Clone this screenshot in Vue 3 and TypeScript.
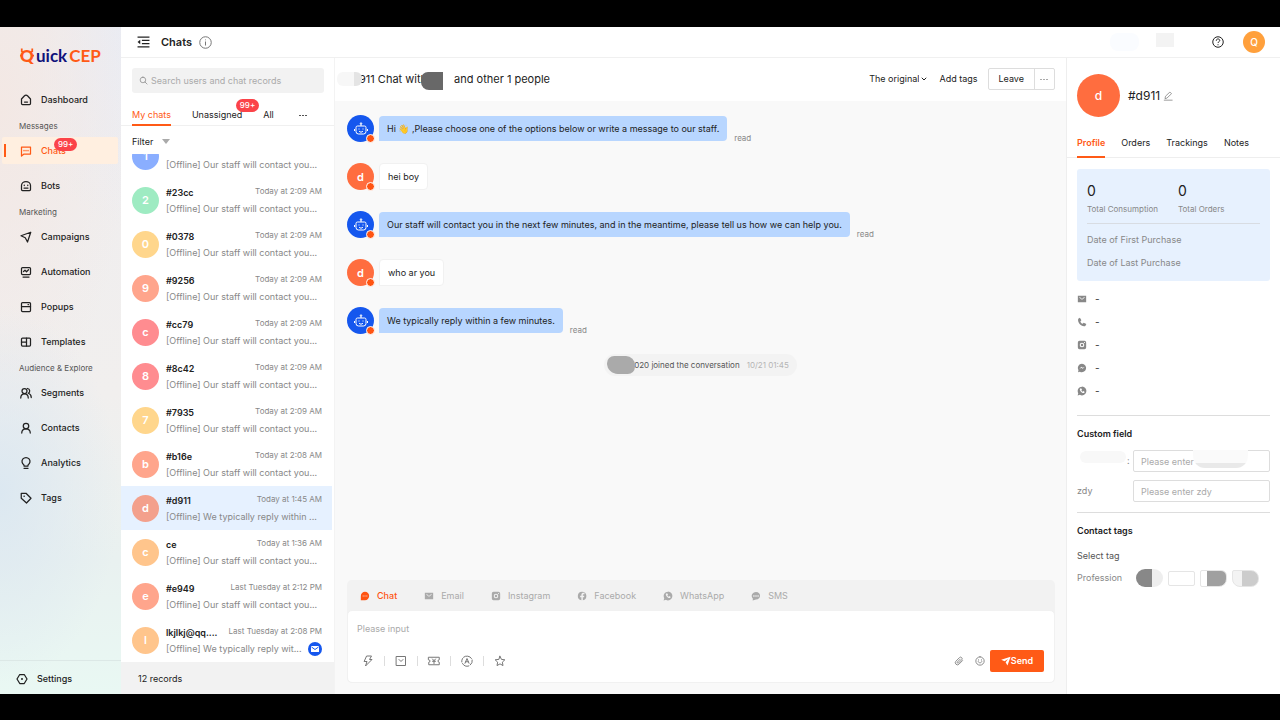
<script setup lang="ts">
import { ref } from 'vue'

interface NavItem { label: string; icon: string; badge?: string; active?: boolean }
interface NavGroup { title?: string; items: NavItem[] }
interface Conversation { initial: string; color: string; name: string; time: string; text: string; mail?: boolean; active?: boolean }
interface Message { from: 'bot' | 'visitor'; text: string; read?: boolean }

const lineIcons: Record<string, string[]> = {
  dashboard: ['M3 10 9 3.500a4 4 0 0 1 6 0L21 10v9a2 2 0 0 1-2 2H5a2 2 0 0 1-2-2z', 'M9 16h6'],
  chats: ['M3 4h18v14H8l-5 4z', 'M8 10.500v1', 'M12 10.500v1', 'M16 10.500v1'],
  bots: ['M3 11a9 8 0 0 1 18 0v8a2 2 0 0 1-2 2H5a2 2 0 0 1-2-2z', 'M8.500 10v1', 'M15.500 10v1', 'M8 16h8'],
  campaigns: ['M21.500 2.500 2 9.500l8.500 4L15 22z'],
  automation: ['M5 3h14a2 2 0 0 1 2 2v10a2 2 0 0 1-2 2H5a2 2 0 0 1-2-2V5a2 2 0 0 1 2-2z', 'M7 11l3-2.500 3 3 4-4', 'M6 22h12'],
  popups: ['M5 3h14a2 2 0 0 1 2 2v14a2 2 0 0 1-2 2H5a2 2 0 0 1-2-2V5a2 2 0 0 1 2-2z', 'M3 11h18', 'M16 7h1'],
  templates: ['M5 4h14a2 2 0 0 1 2 2v12a2 2 0 0 1-2 2H5a2 2 0 0 1-2-2V6a2 2 0 0 1 2-2z', 'M13 4v16', 'M3 12h10'],
  segments: ['M9 3a5 5 0 1 1 0 10A5 5 0 0 1 9 3z', 'M1.500 22c0-5 3-8.500 7.500-8.500s7.500 3.500 7.500 8.500', 'M15 3a5 5 0 0 1 1.500 9.500c3.500 1 6 4.500 6 8.500'],
  contacts: ['M12 2.500a5.500 5.500 0 1 1 0 11 5.500 5.500 0 0 1 0-11z', 'M3.500 22c0-5 3.500-8.500 8.500-8.500s8.500 3.500 8.500 8.500'],
  analytics: ['M8 18v-2A8 8 0 1 1 16 16v2z', 'M8 22.500h8'],
  tags: ['M2.500 2.500h9.500l10 10-9 9.500-10.500-9.500z', 'M8 8h.5v.5H8z'],
  settings: ['M7.500 3h9l5.500 9-5.500 9h-9L2 12z', 'M12 11.200a.8.8 0 1 1 0 1.600.8.8 0 0 1 0-1.600z'],
  bolt: ['M10 2h9l-4 7h5L7 22l3-9H5z'],
  order: ['M3 3h18v18H3z', 'M8 9l4 4 4-4'],
  coupon: ['M1.500 4.500h21v5a2.500 2.500 0 0 0 0 5v5h-21v-5a2.500 2.500 0 0 0 0-5z', 'M9 8l3 3.500L15 8', 'M12 11.500V17', 'M9 12.500h6'],
  translate: ['M5 4.500A10.500 10.500 0 0 1 21 7', 'M22.500 10a10.500 10.500 0 0 1-4 10', 'M15.500 22A10.500 10.500 0 0 1 3 17', 'M1.500 14A10.500 10.500 0 0 1 3 7', 'M8 16.500 12 7l4 9.500', 'M9.500 13.500h5'],
  star: ['M12 2.500l2.900 6.300 6.800.8-5 4.700 1.300 6.900-6-3.500-6 3.500 1.300-6.900-5-4.700 6.800-.8z'],
  clip: ['M20.500 11 12 19.500A5 5 0 0 1 4.500 12.500L13 4a3.500 3.500 0 0 1 5.500 5L10.500 17A1.800 1.800 0 0 1 8 14.500L15 7.500'],
  smile: ['M12 2a10 10 0 1 1 0 20 10 10 0 0 1 0-20z', 'M8.500 9v1', 'M15.500 9v1', 'M7.500 13.500c1.500 4 7.500 4 9 0'],
  search: ['M10.500 3a7.500 7.500 0 1 1 0 15 7.500 7.500 0 0 1 0-15z', 'M16 16l5.500 5.500'],
  edit: ['M3 22h19', 'M5 17.500l1-5L16.500 2.500l4 4L10 16.500z']
}

const solidIcons: Record<string, string> = {
  chat: 'M12 2a10 10 0 1 1 0 20H2V12A10 10 0 0 1 12 2zM6.500 11v2h2v-2zM11 11v2h2v-2zM15.500 11v2h2v-2z',
  mail: 'M2 4h20v16H2zM6 6.500l6 5.500 6-5.500v2.500l-6 5-6-5z',
  phone: 'M3 4 7 1.500 10.500 8 8 10.500c1 2.500 3 4.500 5.500 5.500L16 13.500l6.500 3.500L20 21.500C11 24.500 0 13 3 4z',
  instagram: 'M6 2h12a4 4 0 0 1 4 4v12a4 4 0 0 1-4 4H6a4 4 0 0 1-4-4V6a4 4 0 0 1 4-4zM12 6.500a5.500 5.500 0 1 0 0 11 5.500 5.500 0 0 0 0-11zM12 9a3 3 0 1 1 0 6 3 3 0 0 1 0-6zM17 5v2h2V5z',
  facebook: 'M12 1.500a10.500 10.500 0 0 1 2 20.800V15h3l.5-3.500H14v-2c0-1.300.7-2 2-2h2V4.700C14 4 10.500 5 10.500 9v2.500H7.500V15h3v7.300A10.500 10.500 0 0 1 12 1.500z',
  messenger: 'M12 2a10 10 0 1 1-5 18.700L2.500 22l1-4.500A10 10 0 0 1 12 2zM5.500 14.500l5-3 3 2.500 5-4.500-5 2-3-2.500z',
  whatsapp: 'M12 1.500a10.500 10.500 0 1 1-5 19.700L1.500 22.500 3 17.200A10.500 10.500 0 0 1 12 1.500zM7.500 6C4.500 10 12 19 17.500 16.500l.5-3-3-1.500-1.500 1.500c-1.500-.5-2.500-1.500-3-3L12 9l-1.500-3z',
  sms: 'M12 2.500c13 0 13 18 0 18L4 22.500l.5-4C-1.500 12 3 2.500 12 2.500zM5.500 10v3.500h3V10zM10.500 10v3.500h3V10zM15.500 10v3.500h3V10z',
  send: 'M23 2 .5 9l8 3.500L17 7l-6 8 4.500 8z'
}

const navGroups: NavGroup[] = [
  { items: [{ label: 'Dashboard', icon: 'dashboard' }] },
  { title: 'Messages', items: [{ label: 'Chats', icon: 'chats', badge: '99+', active: true }, { label: 'Bots', icon: 'bots' }] },
  { title: 'Marketing', items: [
    { label: 'Campaigns', icon: 'campaigns' }, { label: 'Automation', icon: 'automation' },
    { label: 'Popups', icon: 'popups' }, { label: 'Templates', icon: 'templates' }] },
  { title: 'Audience & Explore', items: [
    { label: 'Segments', icon: 'segments' }, { label: 'Contacts', icon: 'contacts' },
    { label: 'Analytics', icon: 'analytics' }, { label: 'Tags', icon: 'tags' }] }
]

const staff = '[Offline] Our staff will contact you...'
const conversations: Conversation[] = [
  { initial: '1', color: 'blue', name: '', time: '', text: staff },
  { initial: '2', color: 'green', name: '#23cc', time: 'Today at 2:09 AM', text: staff },
  { initial: '0', color: 'yellow', name: '#0378', time: 'Today at 2:09 AM', text: staff },
  { initial: '9', color: 'coral', name: '#9256', time: 'Today at 2:09 AM', text: staff },
  { initial: 'c', color: 'pink', name: '#cc79', time: 'Today at 2:09 AM', text: staff },
  { initial: '8', color: 'pink', name: '#8c42', time: 'Today at 2:09 AM', text: staff },
  { initial: '7', color: 'yellow', name: '#7935', time: 'Today at 2:09 AM', text: staff },
  { initial: 'b', color: 'coral', name: '#b16e', time: 'Today at 2:08 AM', text: staff },
  { initial: 'd', color: 'rose', name: '#d911', time: 'Today at 1:45 AM', text: '[Offline] We typically reply within ...', active: true },
  { initial: 'c', color: 'peach', name: 'ce', time: 'Today at 1:36 AM', text: staff },
  { initial: 'e', color: 'coral', name: '#e949', time: 'Last Tuesday at 2:12 PM', text: staff },
  { initial: 'l', color: 'peach', name: 'lkjlkj@qq....', time: 'Last Tuesday at 2:08 PM', text: '[Offline] We typically reply wit...', mail: true }
]

const messages: Message[] = [
  { from: 'bot', text: 'Hi 👋 ,Please choose one of the options below or write a message to our staff.', read: true },
  { from: 'visitor', text: 'hei boy' },
  { from: 'bot', text: 'Our staff will contact you in the next few minutes, and in the meantime, please tell us how we can help you.', read: true },
  { from: 'visitor', text: 'who ar you' },
  { from: 'bot', text: 'We typically reply within a few minutes.', read: true }
]

const channels = [
  { label: 'Chat', icon: 'chat' }, { label: 'Email', icon: 'mail' }, { label: 'Instagram', icon: 'instagram' },
  { label: 'Facebook', icon: 'facebook' }, { label: 'WhatsApp', icon: 'whatsapp' }, { label: 'SMS', icon: 'sms' }
]
const channel = ref('Chat')
const tools = [
  { label: 'Quick replies', icon: 'bolt' }, { label: 'Orders', icon: 'order' }, { label: 'Coupons', icon: 'coupon' },
  { label: 'Translate', icon: 'translate' }, { label: 'Rate', icon: 'star' }
]
const contactRows = ['mail', 'phone', 'instagram', 'messenger', 'whatsapp']
const profileTabs = ['Profile', 'Orders', 'Trackings', 'Notes']
const profileTab = ref('Profile')
const draft = ref('')
const query = ref('')
const fieldOne = ref('')
const fieldTwo = ref('')
</script>

<template>
  <div class="stage">
    <div class="app">
      <aside class="sidebar">
        <a class="logo" href="#" aria-label="QuickCEP">
          <span class="logo-q">Q<svg viewBox="0 0 16 18"><path d="M2 1v3l2 1M14 1v3l-2 1M0 9h2M14 9h2" /></svg></span><span class="logo-uick">uick</span><span class="logo-cep">CEP</span>
        </a>
        <nav>
          <div v-for="(group, i) in navGroups" :key="i" class="nav-group">
            <div v-if="group.title" class="nav-title">{{ group.title }}</div>
            <a v-for="item in group.items" :key="item.label" href="#" class="nav-item" :class="{ active: item.active }">
              <svg class="line nav-icon" viewBox="0 0 24 24"><path v-for="d in lineIcons[item.icon]" :key="d" :d="d" /></svg>
              <span class="nav-label">{{ item.label }}<span v-if="item.badge" class="badge nav-badge">{{ item.badge }}</span></span>
            </a>
          </div>
        </nav>
        <a class="settings" href="#">
          <svg class="line nav-icon" viewBox="0 0 24 24"><path v-for="d in lineIcons.settings" :key="d" :d="d" /></svg>
          <span>Settings</span>
        </a>
      </aside>

      <div class="body">
        <header class="topbar">
          <button class="plain" aria-label="Collapse menu">
            <svg class="collapse" viewBox="0 0 24 22"><path d="M1 2h22M9 8h14M9 14h14M1 20h22" /><path class="arrow" d="M1 11l5-4v8z" /></svg>
          </button>
          <h1>Chats</h1>
          <svg class="info" viewBox="0 0 26 26"><circle cx="13" cy="13" r="11.500" /><path d="M13 11v8M13 7v1.500" /></svg>
          <span class="top-mask"><i></i><i></i></span>
          <button class="plain help" aria-label="Help">
            <svg viewBox="0 0 24 24"><circle cx="12" cy="12" r="10.500" /><path d="M8.500 9.500c0-5 7-4.500 7-.5 0 2.500-3.500 2.500-3.500 5M12 16.500v2" /></svg>
          </button>
          <button class="account">Q</button>
        </header>

        <div class="columns">
          <section class="inbox">
            <label class="search">
              <svg class="line" viewBox="0 0 24 24"><path v-for="d in lineIcons.search" :key="d" :d="d" /></svg>
              <input v-model="query" placeholder="Search users and chat records" aria-label="Search users and chat records">
            </label>
            <div class="inbox-tabs">
              <button class="on">My chats</button>
              <button>Unassigned<span class="badge tab-badge">99+</span></button>
              <button>All</button>
              <button class="more" aria-label="More"><span class="dots dark"><i></i><i></i><i></i></span></button>
            </div>
            <button class="filter">Filter <i></i></button>
            <div class="list">
              <button v-for="(c, i) in conversations" :key="i" class="conv" :class="{ current: c.active }">
                <span class="avatar" :class="c.color">{{ c.initial }}</span>
                <span class="conv-text">
                  <span class="conv-head"><b>{{ c.name }}</b><span>{{ c.time }}</span></span>
                  <span class="conv-line"><span>{{ c.text }}</span>
                    <svg v-if="c.mail" class="mail-dot" viewBox="0 0 28 28"><circle cx="14" cy="14" r="14" /><rect x="6" y="8" width="16" height="12" rx="1" /><path d="M7 10l7 5 7-5" /></svg>
                  </span>
                </span>
              </button>
            </div>
            <footer>12 records</footer>
          </section>

          <main class="chat">
            <div class="chat-head">
              <h2><span class="mask-a"></span>911 Chat with<span class="mask-b"></span></h2>
              <span class="others">and other 1 people</span>
              <span class="pick">
                <select aria-label="Language"><option>The original</option></select>
                <svg viewBox="0 0 12 8"><path d="M1.500 1.500 6 6l4.500-4.500" /></svg>
              </span>
              <button class="plain add">Add tags</button>
              <div class="leave"><button>Leave</button><button aria-label="More actions"><span class="dots"><i></i><i></i><i></i></span></button></div>
            </div>

            <div class="thread">
              <div v-for="(m, i) in messages" :key="i" class="msg">
                <span class="avatar" :class="m.from">
                  <svg v-if="m.from === 'bot'" class="robot" viewBox="0 0 28 28"><path d="M14 3v5M7 8h14a3 3 0 0 1 3 3v8a5 5 0 0 1-5 5H9a5 5 0 0 1-5-5v-8a3 3 0 0 1 3-3zM1 14v4M27 14v4M10 13v2M18 13v2M10 18c2 3 6 3 8 0" /><circle cx="14" cy="3" r="1.500" /></svg>
                  <template v-else>d</template>
                  <i class="dot"></i>
                </span>
                <p :class="m.from">{{ m.text }}</p>
                <span v-if="m.read" class="read">read</span>
              </div>
              <div class="joined"><i class="mask-c"></i><span>020 joined the conversation</span><time>10/21 01:45</time></div>
            </div>

            <div class="composer">
              <div class="channels">
                <button v-for="c in channels" :key="c.label" :class="{ on: channel === c.label }" @click="channel = c.label">
                  <svg class="solid" viewBox="0 0 24 24"><path :d="solidIcons[c.icon]" /></svg>{{ c.label }}
                </button>
              </div>
              <div class="editor">
                <textarea v-model="draft" rows="1" placeholder="Please input" aria-label="Message"></textarea>
                <div class="tools">
                  <button v-for="t in tools" :key="t.label" class="tool" :aria-label="t.label">
                    <svg class="line" viewBox="0 0 24 24"><path v-for="d in lineIcons[t.icon]" :key="d" :d="d" /></svg>
                  </button>
                  <span class="spacer"></span>
                  <button class="extra" aria-label="Attach file"><svg class="line" viewBox="0 0 24 24"><path v-for="d in lineIcons.clip" :key="d" :d="d" /></svg></button>
                  <button class="extra" aria-label="Emoji"><svg class="line" viewBox="0 0 24 24"><path v-for="d in lineIcons.smile" :key="d" :d="d" /></svg></button>
                  <button class="send"><svg class="solid" viewBox="0 0 24 24"><path :d="solidIcons.send" /></svg>Send</button>
                </div>
              </div>
            </div>
          </main>

          <aside class="profile">
            <div class="person">
              <span class="big-avatar">d</span><strong>#d911</strong>
              <button class="plain" aria-label="Edit name"><svg class="line" viewBox="0 0 24 24"><path v-for="d in lineIcons.edit" :key="d" :d="d" /></svg></button>
            </div>
            <div class="profile-tabs">
              <button v-for="t in profileTabs" :key="t" :class="{ on: profileTab === t }" @click="profileTab = t">{{ t }}</button>
            </div>
            <div class="profile-body">
              <div class="card">
                <div class="totals">
                  <div><b>0</b><span>Total Consumption</span></div>
                  <div><b>0</b><span>Total Orders</span></div>
                </div>
                <p>Date of First Purchase</p>
                <p>Date of Last Purchase</p>
              </div>
              <ul>
                <li v-for="icon in contactRows" :key="icon"><svg class="solid" viewBox="0 0 24 24"><path :d="solidIcons[icon]" /></svg>-</li>
              </ul>
              <section class="fields">
                <h3>Custom field</h3>
                <div class="field"><span class="field-name"><i class="mask-d"></i>:</span><span class="field-box"><input v-model="fieldOne" placeholder="Please enter" aria-label="Custom field"><i class="mask-e"></i></span></div>
                <div class="field"><label class="field-name" for="zdy">zdy</label><span class="field-box"><input id="zdy" v-model="fieldTwo" placeholder="Please enter zdy"></span></div>
              </section>
              <section class="tag-section">
                <h3>Contact tags</h3>
                <div class="select-tag">Select tag</div>
                <div class="tag-row"><span>Profession</span><i class="tag t1"></i><i class="tag t2"></i><i class="tag t3"></i><i class="tag t4"></i></div>
              </section>
            </div>
          </aside>
        </div>
      </div>
    </div>
  </div>
</template>

<style>
body { margin: 0; background: #000; }
</style>

<style scoped>
* { box-sizing: border-box; }
.stage { height: 100vh; padding: 27px 0 26px; background: #000; font: 9px/14px Inter, "Noto Sans", sans-serif; color: #222; }
.app { height: 100%; display: flex; background: #fff; overflow: hidden; }
button, input, select, textarea { font: inherit; color: inherit; border: 0; background: none; padding: 0; margin: 0; outline: 0; border-radius: 0; }
button { white-space: nowrap; cursor: pointer; }
a { color: inherit; text-decoration: none; }
h1, h2, h3, p, ul { margin: 0; padding: 0; }
svg { display: block; flex: none; overflow: visible; }
.line { fill: none; stroke: currentColor; stroke-width: 2; stroke-linejoin: round; stroke-linecap: round; }
.solid { fill: currentColor; fill-rule: evenodd; width: 10px; height: 10px; }
::placeholder { color: #aaa; opacity: 1; }

.sidebar { flex: 0 0 121px; display: flex; flex-direction: column;
  background: radial-gradient(ellipse 120px 190px at 0 70%, #dce8f1, transparent), radial-gradient(ellipse 130px 320px at 0 12%, #f3e8e4, transparent), radial-gradient(ellipse 100px 200px at 100% 0, #eaecf3, transparent), linear-gradient(#efedef, #f1efee 55%, #e9f1f0 80%, #e9f8f3); }
.logo { display: flex; align-items: center; height: 24px; margin: 17px 0 14px 20px; font: 700 17px/24px Lato, sans-serif; color: #ff5a16; }
.logo-q { position: relative; width: 16px; font-weight: 900; }
.logo-q svg { position: absolute; left: 0; top: 3px; width: 14px; height: 17px; fill: none; stroke: #ff5a16; stroke-width: 2; }
.logo-uick { color: #10127b; font-weight: 700; }
.logo-cep { margin-left: 2px; font-weight: 700; }
nav { flex: 1; }
.nav-group { display: flex; flex-direction: column; }
.nav-title { height: 16px; line-height: 19px; padding-left: 19px; font-size: 8px; color: #555; white-space: nowrap; }
.nav-item { display: flex; align-items: center; height: 27px; margin: 4px 3px 4px 2px; padding-left: 18px; font-weight: 500; border-radius: 2px; position: relative; }
.nav-icon { width: 12px; height: 12px; margin-right: 9px; stroke-width: 2.5; }
.nav-label { position: relative; }
.nav-item.active { background: #ffefe0; color: #ff5a16; }
.nav-item.active::before { content: ""; position: absolute; left: 2px; top: 7px; width: 2px; height: 13px; background: #ff5a16; }
.badge { position: absolute; height: 13px; padding: 0 4px; border-radius: 7px; background: #fb4349; color: #fff; font: 500 8px/13px Inter, sans-serif; }
.nav-badge { left: 13px; top: -6px; }
.settings { display: flex; align-items: center; height: 34px; padding: 3px 0 0 16px; border-top: 1px solid #dce8e6; font-weight: 500; }

.body { flex: 1; min-width: 0; display: flex; flex-direction: column; }
.topbar { display: flex; align-items: center; height: 31px; flex: none; padding: 0 15px 0 16px; border-bottom: 1px solid #f0f0f0; }
.collapse { width: 13px; height: 12px; fill: none; stroke: #222; stroke-width: 2; }
.collapse .arrow { fill: #222; stroke: none; }
h1 { margin: 0 7px 0 11px; font-size: 11px; font-weight: 600; }
.info { width: 13px; height: 13px; fill: none; stroke: #777; stroke-width: 2; }
.top-mask { display: flex; gap: 17px; margin-left: auto; margin-right: 38px; }
.top-mask i { width: 29px; height: 18px; border-radius: 8px; background: #fafcff; }
.top-mask i + i { width: 18px; height: 14px; border-radius: 0; background: #f3f3f3; }
.help svg { width: 12px; height: 12px; fill: none; stroke: #222; stroke-width: 2; }
.account { width: 22px; height: 22px; margin-left: 19px; border-radius: 50%; background: #ffa03c; color: #fff; font-size: 10px; font-weight: 500; }
.columns { flex: 1; min-height: 0; display: flex; }

.inbox { flex: 0 0 214px; min-width: 0; display: flex; flex-direction: column; border-right: 1px solid #f3f3f3; min-height: 0; }
.search { display: flex; align-items: center; gap: 3px; height: 25px; margin: 10px 10px 0 11px; padding: 0 7px; border-radius: 3px; background: #f2f2f2; }
.search svg { width: 9px; height: 9px; color: #888; }
.search input { flex: 1; min-width: 0; }
.inbox-tabs { display: flex; gap: 21px; height: 22px; margin-top: 11px; padding-left: 11px; border-bottom: 1px solid #f0f0f0; }
.inbox-tabs button { position: relative; height: 22px; padding-top: 2px; border-bottom: 2px solid transparent; }
.inbox-tabs .on { color: #ff5a16; border-color: #ff5a16; }
.tab-badge { right: -17px; top: -5px; }
.inbox-tabs .more { margin-left: 4px; }
.dots { display: flex; gap: 2px; color: #aaa; }
.dots i { width: 2px; height: 1px; background: currentColor; }
.dots.dark { gap: 1px; color: #555; }
.filter { display: flex; align-items: center; gap: 9px; height: 28px; margin-left: 11px; padding-top: 3px; }
.filter i { border: 4px solid transparent; border-top: 5px solid #aaa; border-bottom: 0; }
.list { flex: 1; min-height: 0; overflow: hidden; padding-right: 2px; }
.conv { display: flex; align-items: center; width: 100%; height: 44px; padding: 0 10px 0 11px; text-align: left; }
.conv:first-child { margin-top: -20px; }
.conv.current { background: #e6f1ff; }
.avatar { position: relative; flex: none; width: 27px; height: 27px; display: flex; align-items: center; justify-content: center; border-radius: 50%; color: #fff; font-size: 11px; font-weight: 600; }
.blue { background: #8aaeff; }
.green { background: #9eebc2; }
.yellow { background: #ffd68c; }
.coral { background: #ffa58c; }
.pink { background: #ff8c90; }
.rose { background: #f3a08c; }
.peach { background: #ffc58c; }
.conv-text { flex: 1; min-width: 0; margin-left: 7px; padding-top: 1px; }
.conv-head { display: flex; justify-content: space-between; height: 16px; line-height: 16px; white-space: nowrap; }
.conv-head b { font-weight: 600; }
.conv-head span { font-size: 8px; line-height: 12px; color: #888; }
.conv-line { display: flex; justify-content: space-between; align-items: center; height: 15px; color: #888; white-space: nowrap; }
.mail-dot { width: 14px; height: 14px; fill: #1557ee; }
.mail-dot rect { fill: #fff; }
.mail-dot path { fill: none; stroke: #1557ee; stroke-width: 2; }
.inbox footer { height: 32px; line-height: 33px; padding-left: 17px; background: #f2f2f2; }

.chat { flex: 1; min-width: 0; display: flex; flex-direction: column; background: #f9f9f9; }
.chat-head { display: flex; align-items: center; height: 43px; flex: none; padding: 0 11px 1px 24px; background: #fff; }
h2 { position: relative; font-weight: 400; font-size: 11px; white-space: nowrap; }
.mask-a { position: absolute; left: -22px; top: 0; width: 25px; height: 14px; border-radius: 6px; background: linear-gradient(90deg, #f7f7f7 70%, #e4e4e4 70%); }
.mask-b { position: absolute; left: 62px; top: 0; width: 22px; height: 18px; border-radius: 7px 0 0 8px; background: #686868; }
.others { margin-left: 27px; font-size: 11px; white-space: nowrap; }
.pick { display: flex; align-items: center; gap: 2px; margin-left: auto; }
.pick select { appearance: none; field-sizing: content; }
.pick svg { width: 6px; height: 4px; fill: none; stroke: #222; stroke-width: 2; }
.add { margin: 0 10px 0 12px; }
.leave { display: flex; height: 22px; border: 1px solid #ddd; border-radius: 2px; }
.leave button { padding: 0 10px; }
.leave button + button { width: 20px; padding: 0 5px; border-left: 1px solid #ddd; }
.leave .dots { gap: 1px; }
.thread { flex: 1; min-height: 0; padding: 14px 12px; overflow: hidden; }
.msg { display: flex; height: 27px; margin-bottom: 21px; }
.bot.avatar { background: #1557ee; }
.visitor.avatar { background: #ff6d3f; }
.robot { width: 14px; height: 14px; fill: none; stroke: #fff; stroke-width: 2; }
.dot { position: absolute; right: -1px; bottom: -1px; width: 9px; height: 9px; border: 1px solid #fff; border-radius: 50%; background: #ff5412; }
.msg p { height: 27px; margin-left: 5px; padding: 0 8px; line-height: 25px; border-radius: 4px 4px 4px 0; white-space: nowrap; }
.msg p.bot { background: #b8d6ff; height: 25px; margin-top: 1px; }
.msg p.visitor { background: #fff; border: 1px solid #f1f1f1; }
.read { align-self: flex-end; margin-left: 7px; font-size: 8px; line-height: 10px; color: #888; margin-bottom: -1px; }
.joined { position: relative; display: flex; gap: 7px; width: max-content; height: 22px; margin: -1px auto 0; padding: 0 8px 0 30px; border-radius: 11px; background: #f3f3f3; font-size: 8px; line-height: 22px; color: #555; }
.joined time { color: #b5b5b5; }
.mask-c { position: absolute; left: 3px; top: 2px; width: 28px; height: 18px; border-radius: 8px 10px 8px 12px; background: #aaa; }
.composer { margin: 0 11px 11px 12px; border-radius: 5px; background: #f2f2f2; }
.channels { display: flex; gap: 27px; height: 30px; padding: 1px 0 0 13px; }
.channels button { display: flex; align-items: center; gap: 7px; color: #aaa; }
.channels .on { color: #ff5412; font-weight: 500; }
.editor { border: 1px solid #f1f1f1; border-radius: 5px; background: #fff; padding: 11px 10px 10px 9px; }
.editor textarea { display: block; width: 100%; height: 14px; resize: none; overflow: hidden; }
.tools { display: flex; align-items: center; margin-top: 14px; padding-left: 5px; color: #777; }
.tool { display: flex; align-items: center; }
.tool + .tool::before { content: ""; width: 1px; height: 10px; margin: 0 10px; background: #ddd; }
.tool svg { width: 12px; height: 12px; }
.spacer { flex: 1; }
.extra { margin-right: 11px; }
.extra + .send { margin-left: -6px; }
.extra svg { width: 10px; height: 10px; }
.send { display: flex; align-items: center; justify-content: center; width: 54px; height: 22px; border-radius: 2px; background: #ff5a16; color: #fff; font-weight: 600; }

.profile { flex: 0 0 214px; border-left: 1px solid #eee; background: #fff; }
.person { display: flex; align-items: center; padding: 16px 10px 0; }
.big-avatar { width: 43px; height: 43px; border-radius: 50%; background: #ff6d3f; color: #fff; font-weight: 500; font-size: 12px; line-height: 43px; text-align: center; }
.person strong { margin: 0 3px 0 8px; font-size: 12px; font-weight: 400; }
.person svg { width: 10px; height: 10px; color: #888; }
.profile-tabs { display: flex; gap: 16px; height: 26px; margin-top: 15px; padding-left: 10px; border-bottom: 1px solid #eee; }
.profile-tabs button { height: 26px; padding: 0 0 2px; border-bottom: 2px solid transparent; }
.profile-tabs .on { color: #ff5a16; border-color: #ff5a16; font-weight: 600; }
.profile-body { padding: 11px 10px; }
.card { padding: 12px 10px 7px; border-radius: 3px; background: #e7f1fe; color: #888; }
.totals { display: grid; grid-template-columns: 91px 1fr; padding-bottom: 6px; margin-bottom: 4px; border-bottom: 1px solid #d8dce2; }
.totals div { display: flex; flex-direction: column; white-space: nowrap; }
.totals b { font-size: 14px; line-height: 20px; font-weight: 400; color: #222; }
.totals span { font-size: 8px; line-height: 16px; }
.card p { height: 23px; line-height: 23px; }
ul { list-style: none; padding: 6px 0 13px; border-bottom: 1px solid #ddd; }
li { display: flex; align-items: center; gap: 8px; height: 23px; color: #333; font-size: 10px; }
li svg { color: #888; width: 9px; height: 9px; }
h3 { font-size: 9px; font-weight: 600; line-height: 14px; }
.fields { padding: 11px 0 10px; border-bottom: 1px solid #ddd; }
.field { display: flex; align-items: center; margin-top: 8px; color: #888; }
h3 + .field { margin-top: 9px; }
.field-name { flex: 0 0 56px; line-height: 22px; display: flex; }
.field-box { position: relative; flex: 1; min-width: 0; }
.field-box input { display: block; width: 100%; height: 22px; padding: 0 7px; border: 1px solid #ddd; border-radius: 2px; }
.mask-d { width: 46px; height: 12px; margin: 1px 1px 0 3px; border-radius: 6px; background: #f8f8f8; }
.mask-e { position: absolute; left: 60px; top: 0; width: 55px; height: 18px; background: linear-gradient(#fafafa 70%, #e9e9e9 70%); border-radius: 0 0 12px 12px; }
.tag-section { padding-top: 11px; }
.select-tag { margin-top: 11px; color: #555; }
.tag-row { display: flex; align-items: center; gap: 5px; margin-top: 6px; color: #888; }
.tag-row span { width: 54px; }
.tag { width: 27px; height: 15px; border: 1px solid #e5e5e5; border-radius: 2px; }
.t1 { height: 18px; border: 0; border-radius: 9px; background: linear-gradient(90deg, #888 60%, #eee 60%); }
.t3 { height: 17px; background: linear-gradient(90deg, #fff 25%, #a0a0a0 25%); border-radius: 2px 6px 8px 2px; }
.t4 { height: 17px; background: linear-gradient(90deg, #f3f3f3 38%, #ccc 38%); border-radius: 2px 8px 8px 8px; }
</style>
